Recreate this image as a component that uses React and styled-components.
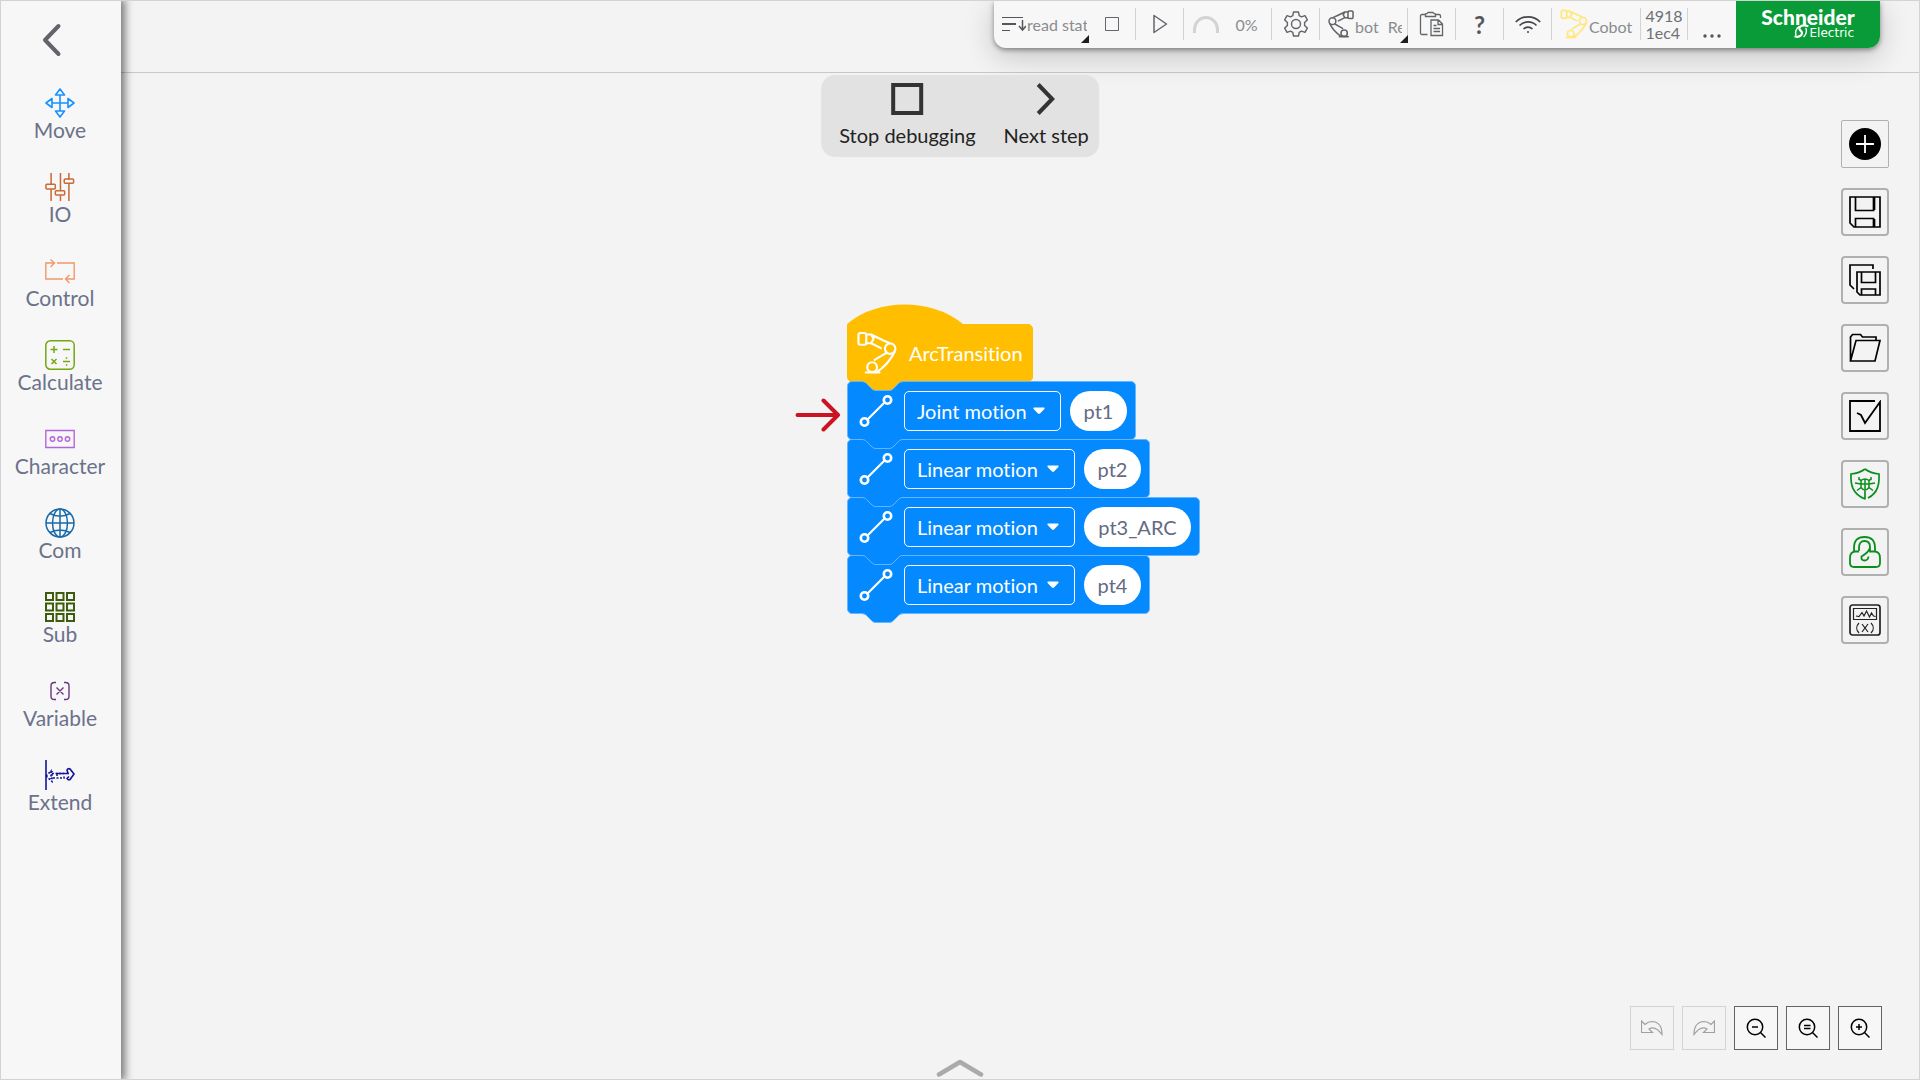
import styled, { createGlobalStyle } from 'styled-components'

const categories = [
  { name: 'Move', icon: <MoveIcon /> },
  { name: 'IO', icon: <SlidersIcon /> },
  { name: 'Control', icon: <LoopIcon /> },
  { name: 'Calculate', icon: <CalculateIcon /> },
  { name: 'Character', icon: <CharacterIcon /> },
  { name: 'Com', icon: <GlobeIcon /> },
  { name: 'Sub', icon: <GridIcon /> },
  { name: 'Variable', icon: <VariableIcon /> },
  { name: 'Extend', icon: <ExtendIcon /> },
]

const steps = [
  { motion: 'Joint motion', point: 'pt1', selectWidth: 157, pointWidth: 57 },
  { motion: 'Linear motion', point: 'pt2', selectWidth: 171, pointWidth: 57 },
  { motion: 'Linear motion', point: 'pt3_ARC', selectWidth: 171, pointWidth: 107 },
  { motion: 'Linear motion', point: 'pt4', selectWidth: 171, pointWidth: 57 },
]

const tools = [
  { name: 'Add', icon: <AddIcon />, thin: true },
  { name: 'Save', icon: <SaveIcon /> },
  { name: 'Save as', icon: <SaveAsIcon /> },
  { name: 'Open', icon: <FolderIcon /> },
  { name: 'Check', icon: <CheckIcon /> },
  { name: 'Debug', icon: <ShieldBugIcon /> },
  { name: 'Unlock', icon: <LockIcon /> },
  { name: 'Monitor variables', icon: <MonitorIcon /> },
]

const App = () => {
  return (
    <>
      <GlobalStyle />
      <Page>
        <Sidebar>
          <BackButton aria-label="Back">
            <svg width="20" height="34" viewBox="0 0 20 34">
              <path d="M16.500 3 3 17l13.500 14" fill="none" stroke="#626469" strokeWidth="4" strokeLinecap="round" strokeLinejoin="round" />
            </svg>
          </BackButton>
          {categories.map(({ name, icon }) => (
            <Category key={name}>
              {icon}
              <span>{name}</span>
            </Category>
          ))}
        </Sidebar>
        <Main>
          <Header>
            <StatusBar />
          </Header>
          <Canvas>
            <Program />
            <Toolbox>
              {tools.map(({ name, icon, thin }) => (
                <ToolButton key={name} aria-label={name} $thin={thin}>
                  {icon}
                </ToolButton>
              ))}
            </Toolbox>
            <ZoomBar>
              <ZoomButton aria-label="Undo" disabled>
                <UndoIcon />
              </ZoomButton>
              <ZoomButton aria-label="Redo" disabled>
                <UndoIcon flip />
              </ZoomButton>
              <ZoomButton aria-label="Zoom out">
                <MagnifierIcon d="M6 9h6" />
              </ZoomButton>
              <ZoomButton aria-label="Reset zoom">
                <MagnifierIcon d="M6 7.500h6.500M6 10.500h6.500" />
              </ZoomButton>
              <ZoomButton aria-label="Zoom in">
                <MagnifierIcon d="M6 9h6M9 6v6" />
              </ZoomButton>
            </ZoomBar>
          </Canvas>
        </Main>
        <DebugPanel>
          <DebugButton>
            <svg width="34" height="34" viewBox="0 0 34 34">
              <rect x="3" y="3" width="28" height="28" fill="none" stroke="#333" strokeWidth="4" />
            </svg>
            Stop debugging
          </DebugButton>
          <DebugButton>
            <svg width="34" height="34" viewBox="0 0 34 34">
              <path d="M9 2.500 23 17 9 31.500" fill="none" stroke="#333" strokeWidth="4" />
            </svg>
            Next step
          </DebugButton>
        </DebugPanel>
        <DrawerHandle aria-label="Open drawer">
          <svg width="48" height="18" viewBox="0 0 48 18">
            <path d="M3 15.500 24 3l21 12.500" fill="none" stroke="#a8aaac" strokeWidth="4.500" strokeLinecap="round" strokeLinejoin="round" />
          </svg>
        </DrawerHandle>
      </Page>
    </>
  )
}

export default App

const StatusBar = () => {
  return (
    <Bar>
      <Cell as="button" $width={95} $start $plain>
        <ThreadIcon />
        <Clip $width={60}>read stat</Clip>
        <Corner $right={0} />
      </Cell>
      <Cell as="button" aria-label="Stop" $width={47}>
        <svg width="14" height="14" viewBox="0 0 14 14">
          <path d="M.5.5h13v13H.5z" fill="none" stroke="#626469" />
        </svg>
      </Cell>
      <Cell as="button" aria-label="Run" $width={48}>
        <svg width="16" height="20" viewBox="0 0 16 20">
          <path d="M2 1.500 14.500 10 2 18.500z" fill="none" stroke="#626469" strokeWidth="1.500" strokeLinejoin="round" />
        </svg>
      </Cell>
      <Cell $width={88} $gap={16}>
        <svg width="26" height="17" viewBox="0 0 26 17">
          <path d="M1.500 17v-3.500a11.500 12 0 0 1 23 0V17" fill="none" stroke="#d3d3d3" strokeWidth="3" />
        </svg>
        <Percent>0%</Percent>
      </Cell>
      <Cell as="button" aria-label="Settings" $width={48}>
        <GearIcon />
      </Cell>
      <Cell as="button" $width={88} $start>
        <RobotIcon width={26} height={30} color="#626469" stroke={2.4} flip />
        <LowText>bot</LowText>
        <Clip $width={14} $low>
          Re
        </Clip>
        <Corner $right={-1} />
      </Cell>
      <Cell as="button" aria-label="Logs" $width={48}>
        <ClipboardIcon />
      </Cell>
      <Cell as="button" aria-label="Help" $width={48}>
        <Question>?</Question>
      </Cell>
      <Cell as="button" aria-label="Network" $width={48}>
        <WifiIcon />
      </Cell>
      <Cell as="button" $width={89} $start>
        <RobotIcon width={28} height={30} color="#ffe87c" stroke={2.6} />
        <LowText>Cobot</LowText>
      </Cell>
      <Cell $width={47}>
        <Serial>
          4918
          <br />
          1ec4
        </Serial>
      </Cell>
      <Cell as="button" aria-label="More" $width={48} $plain>
        <Dots width="18" height="4" viewBox="0 0 18 4">
          <path d="M2 2h.01M9 2h.01M16 2h.01" stroke="#54565b" strokeWidth="3.400" strokeLinecap="round" />
        </Dots>
      </Cell>
      <Brand>
        <strong>Schneider</strong>
        <span>
          <svg width="15" height="15" viewBox="0 0 15 15">
            <path d="M13.500 2C9 .5 5 2 5.500 5c.5 2 3 2 2.500 4.500C7.500 12 4 13.500 1.500 12.500" fill="none" stroke="#fff" strokeWidth="2.200" strokeLinecap="round" />
            <path d="M5 2.500C2 5 1 8 2 11M10 12.500c2-2 3-5 2-8" fill="none" stroke="#fff" strokeWidth="1.400" strokeLinecap="round" />
          </svg>
          Electric
        </span>
      </Brand>
    </Bar>
  )
}

const Program = () => {
  return (
    <Stack>
      <Pointer width="46" height="34" viewBox="0 0 46 34">
        <path d="M2.500 17H43M28.500 2.500 43 17 28.500 31.500" fill="none" stroke="#cb1423" strokeWidth="4" strokeLinecap="round" strokeLinejoin="round" />
      </Pointer>
      <Hat width="116" height="20" viewBox="0 0 116 20">
        <path d="M0 20C30-6 85-6 116 20z" fill="#ffbf00" />
      </Hat>
      <StartBlock>
        <RobotIcon width={40} height={44} color="#fff" stroke={2.2} />
        <span>ArcTransition</span>
        <BlockNotch fill="#ffbf00" />
      </StartBlock>
      {steps.map(({ motion, point, selectWidth, pointWidth }) => (
        <Block key={point}>
          <svg width="34" height="34" viewBox="0 0 34 34">
            <path d="m8.500 25.500 17-17" stroke="#fff" strokeWidth="2.200" />
            <circle cx="5.500" cy="28" r="3.700" fill="none" stroke="#fff" strokeWidth="2.600" />
            <circle cx="28.500" cy="6" r="3.700" fill="none" stroke="#fff" strokeWidth="2.600" />
          </svg>
          <SelectBox $width={selectWidth}>
            <select aria-label={`Motion type of ${point}`} defaultValue={motion}>
              <option>Joint motion</option>
              <option>Linear motion</option>
            </select>
            <svg width="14" height="10" viewBox="0 0 14 10">
              <path d="M2 1.500h10q1.200.4.400 1.500L8 7.500q-1 .8-2 0L1.600 3Q.8 1.900 2 1.500z" fill="#fff" />
            </svg>
          </SelectBox>
          <Point aria-label="Point" defaultValue={point} $width={pointWidth} />
          <BlockNotch fill="#0489ff" />
        </Block>
      ))}
    </Stack>
  )
}

const BlockNotch = ({ fill }) => (
  <Notch width="42" height="11" viewBox="0 0 42 11">
    <path d="M0 0v1C3 1 4 2 5 3l5 5q1.500 1.500 4 1.500h13q2.500 0 4-1.500l5-5c1-1 2-2 5-2V0z" fill={fill} />
    <path d="M0 .5C3 .5 4 2 5 3l5 5q1.500 1.500 4 1.500h13q2.500 0 4-1.500l5-5c1-1 2-2.500 5-2.500" fill="none" stroke="#63b6ff" />
  </Notch>
)

function RobotIcon({ width, height, color, stroke, flip }) {
  return (
    <svg width={width} height={height} viewBox="0 0 41 45">
      <g transform={flip ? 'matrix(-1 0 0 1 41 0)' : undefined} fill="none" stroke={color} strokeWidth={stroke} strokeLinecap="round" strokeLinejoin="round">
        <rect x="1.500" y="2" width="8" height="12" rx="2" />
        <path d="M9.500 3.500h5L17 8l-2.500 4.500h-5M14.500 3.500c6 3 11 5.500 18 8.500M14.500 12.500l10 5" />
        <circle cx="34" cy="18" r="5.400" />
        <path d="m30 22.500-5 3-7 4M38.500 21.500c-4 8-10 15-17.500 20" />
        <circle cx="15.500" cy="37" r="5" />
        <path d="M9 42.500h14" />
      </g>
    </svg>
  )
}

function MoveIcon() {
  return (
    <svg width="30" height="30" viewBox="0 0 30 30" fill="none" stroke="#1890ff" strokeWidth="1.600" strokeLinejoin="round">
      <path d="M15 7v16M7 15h16M15 1l4.500 6h-9zM15 29l4.500-6h-9zM1 15l6-4.500v9zM29 15l-6-4.500v9z" />
    </svg>
  )
}

function SlidersIcon() {
  return (
    <svg width="32" height="32" viewBox="0 0 32 32" fill="none" stroke="#c76a35" strokeWidth="1.600">
      <path d="M6.500 1v12M6.500 18v13M16.500 1v19M16.500 25v6M25.500 1v7M25.500 12v19" />
      <rect x="1" y="13" width="10" height="5" rx="1" />
      <rect x="11" y="20" width="10" height="4.500" rx="1" />
      <rect x="20.500" y="7.500" width="10" height="4.500" rx="1" />
    </svg>
  )
}

function LoopIcon() {
  return (
    <svg width="30" height="30" viewBox="0 0 30 30" fill="none" stroke="#f0986a" strokeWidth="1.400">
      <path d="M18 23H.8V7H9M12 7h17.200v16H21M5.500 3.500 9.500 7l-4 4M24.500 19 20.500 23l4 4" />
    </svg>
  )
}

function CalculateIcon() {
  return (
    <svg width="30" height="30" viewBox="0 0 30 30" fill="none" stroke="#73a812" strokeWidth="1.500">
      <rect x=".8" y=".8" width="28.400" height="28.400" rx="4.500" />
      <path d="M5.500 9.500h7M9 6v7M18 9.500h7M6.500 19l5 5M11.500 19l-5 5M18 21.500h7M20.800 18h1.500M20.800 25h1.500" />
    </svg>
  )
}

function CharacterIcon() {
  return (
    <svg width="30" height="30" viewBox="0 0 30 30" fill="none" stroke="#b565db" strokeWidth="1.400">
      <path d="M.8 6.500h28.400v17H.8z" />
      <circle cx="7.500" cy="15" r="2.200" />
      <circle cx="15" cy="15" r="2.200" />
      <circle cx="22.500" cy="15" r="2.200" />
    </svg>
  )
}

function GlobeIcon() {
  return (
    <svg width="30" height="30" viewBox="0 0 30 30" fill="none" stroke="#1769aa" strokeWidth="1.500">
      <circle cx="15" cy="15" r="14" />
      <ellipse cx="15" cy="15" rx="7.500" ry="14" />
      <path d="M1 15h28M15 1v28M5 5.500c6 3.500 14 3.500 20 0M5 24.500c6-3.500 14-3.500 20 0" />
    </svg>
  )
}

function GridIcon() {
  return (
    <svg width="30" height="30" viewBox="0 0 30 30" fill="none" stroke="#3d5c0c" strokeWidth="2">
      {[1, 11.5, 22].map(y => [1, 11.5, 22].map(x => <rect key={`${x}-${y}`} x={x} y={y} width="7" height="7" />))}
    </svg>
  )
}

function VariableIcon() {
  return (
    <svg width="30" height="30" viewBox="0 0 30 30" fill="none" stroke="#6b3584" strokeWidth="1.400">
      <path d="M11 6.500H9.500q-3.500 0-3.500 3.500v10.500q0 3 3.500 3H11M19 6.500h1.500q3.500 0 3.500 3.500v10.500q0 3-3.500 3H19M11.500 11.500l7 7M18.500 11.500l-7 7" />
    </svg>
  )
}

function ExtendIcon() {
  return (
    <svg width="30" height="30" viewBox="0 0 30 30" fill="none" stroke="#141496" strokeWidth="1.600">
      <path d="M1 0v30" />
      <path d="M12 16v-2.500h11l-1-3.500q1-2 3-1l4 5-4 5.500q-2 1-3-1l2-2M12 13.500h12" />
      <path d="M1 16 6 11v8M1 16l6 5.500V11M7 13.500h12M8 18h11v-3" strokeDasharray="2 1.500" />
    </svg>
  )
}

function ThreadIcon() {
  return (
    <svg width="24" height="16" viewBox="0 0 24 16" fill="none" stroke="#54565b">
      <path d="M0 1.500h21M0 14.500h8" strokeWidth="1.200" />
      <path d="M0 8h14" strokeWidth="2" />
      <path d="M20.500 4v9.500M17 10l3.500 4 3.500-4" strokeWidth="1.500" />
    </svg>
  )
}

function GearIcon() {
  return (
    <svg width="24" height="26" viewBox="0 0 24 26" fill="none" stroke="#626469" strokeWidth="1.400" strokeLinejoin="round">
      <path d="M9.500 1h5l.7 3.600 2.300 1.300 3.500-1.200 2.300 4.200-2.700 2.500v3.200l2.700 2.500-2.300 4.200-3.500-1.200-2.300 1.300-.7 3.600h-5l-.7-3.600-2.300-1.300L3 21.300.7 17.100l2.700-2.500v-3.200L.7 8.900 3 4.700l3.500 1.200 2.300-1.300z" />
      <circle cx="12" cy="13" r="4.500" />
    </svg>
  )
}

function ClipboardIcon() {
  return (
    <svg width="25" height="26" viewBox="0 0 24 26" fill="none" stroke="#626469" strokeWidth="1.300">
      <path d="M8 23.500H2.500Q1 23.500 1 22V5q0-1.500 1.500-1.500H6M16 3.500h3.500Q21 3.500 21 5v2M6 5.500V3q2-.3 2.500-1.500h5Q14 2.700 16 3v2.500z" />
      <path d="M11.500 9h7.500l4 4v11.500H11.500zM18.500 9v4.500H23M14 14.500h3M14 17.500h6.500M14 20.500h6.500" />
    </svg>
  )
}

function WifiIcon() {
  return (
    <svg width="26" height="20" viewBox="0 0 26 20" fill="none" stroke="#45474b" strokeWidth="1.700">
      <path d="M.8 8a17 17 0 0 1 24.400 0M4.500 11.500a12 12 0 0 1 17 0M8.500 15a6.500 6.500 0 0 1 9 0" />
      <circle cx="13" cy="18" r="1" fill="#45474b" stroke="none" />
    </svg>
  )
}

function AddIcon() {
  return (
    <svg width="32" height="32" viewBox="0 0 32 32">
      <circle cx="16" cy="16" r="16" />
      <path d="M7 16h18M16 7v18" stroke="#fff" strokeWidth="1.800" />
    </svg>
  )
}

function SaveIcon() {
  return (
    <svg width="32" height="32" viewBox="0 0 32 32" fill="none" stroke="#000" strokeWidth="1.700">
      <path d="M1 1h30v30H5l-4-4zM6.500 1v13.500h18V1M6.500 31v-8.500h18V31M25.500 1v13M25.500 23v8" />
    </svg>
  )
}

function SaveAsIcon() {
  return (
    <svg width="32" height="32" viewBox="0 0 32 32" fill="none" stroke="#000" strokeWidth="1.700">
      <path d="M24 5V1H1v20l4 4M8 8h23v23H11l-3-3zM12.500 8v10.500h14V8M12.500 31v-6h14v6" />
    </svg>
  )
}

function FolderIcon() {
  return (
    <svg width="32" height="32" viewBox="0 0 32 32" fill="none" stroke="#000" strokeWidth="1.700">
      <path d="M1.500 29V5l2-2.500h8L13.500 5h13.500v3.500M1.500 29 7 8.500h24L26 29z" />
    </svg>
  )
}

function CheckIcon() {
  return (
    <svg width="32" height="32" viewBox="0 0 32 32" fill="none" stroke="#000" strokeWidth="1.800">
      <path d="M26 1H1v30h30V2L16 23l-4-8-4-2" />
    </svg>
  )
}

function ShieldBugIcon() {
  return (
    <svg width="32" height="34" viewBox="0 0 32 34" fill="none" stroke="#0a8f1e" strokeWidth="1.700">
      <path d="M16 32.500v-9M16 2C12 5 7 6.500 2 7c-.5 10 1 20 14 25M16 2c4 3 9 4.500 14 5 .5 10-1 19-11 24" />
      <path d="M12 13.500q4-3 8 0v7q-4 5-8 0zM12 17h8M10 10v2.500l3 1M22 10v2.500l-3 1M6 16l6 1M26 16l-6 1M8 23.500l4-3M24 23.500l-4-3M16 12v10" strokeWidth="1.500" />
    </svg>
  )
}

function LockIcon() {
  return (
    <svg width="32" height="32" viewBox="0 0 32 32" fill="none" stroke="#0a8f1e" strokeWidth="1.800">
      <path d="M10 15v-3q0-7 5.500-7t5.500 6q0 3-3 5.500-1.500 1.500-5.500 4-.5 4 3 4t4-4M10 15.500H6Q1 16 1 22v5q0 4 4 4h22q4 0 4-4v-5q0-6-5-6.500V12Q26 1 15.500 1T5 12v4M21 11v4.500h5" />
    </svg>
  )
}

function MonitorIcon() {
  return (
    <svg width="32" height="32" viewBox="0 0 32 32" fill="none" stroke="#222" strokeWidth="1.700">
      <rect x="1" y="1" width="30" height="30" rx="2.500" />
      <path d="M4.500 4.500h23v11h-23zM7 12l3 .5 3-4 2 3.500 2.500-5 3 6 2-4 2 3 2 .5M10 19c-3 3-3 7 0 10M22 19c3 3 3 7 0 10M13 20l6 8M19 20l-6 8" strokeWidth="1.200" />
    </svg>
  )
}

function UndoIcon({ flip }) {
  return (
    <svg width="22" height="16" viewBox="0 0 22 16">
      <path transform={flip ? 'matrix(-1 0 0 1 22 0)' : undefined} d="M.5 1v11.500h11L8 9q6-4 13 5.500Q21 2 11 1.500 7 1.500 4 4.500z" fill="none" stroke="#a0a0a0" strokeWidth="1.200" />
    </svg>
  )
}

function MagnifierIcon({ d }) {
  return (
    <svg width="20" height="20" viewBox="0 0 20 20" fill="none" stroke="#000" strokeWidth="1.500">
      <circle cx="9" cy="9" r="7.700" />
      <path d="m14.500 14.500 5 5" />
      <path d={d} />
    </svg>
  )
}

const GlobalStyle = createGlobalStyle`
  body {
    margin: 0;
    background: #f3f3f3;
    font-family: Lato, 'Open Sans', sans-serif;
    font-variant-ligatures: none;
  }
  *, *::before, *::after {
    box-sizing: border-box;
  }
  button, select, input {
    font: inherit;
    font-variant-ligatures: none;
    color: inherit;
    margin: 0;
    padding: 0;
    border: 0;
    background: none;
  }
  svg {
    display: block;
    flex-shrink: 0;
  }
`

const Page = styled.div`
  position: relative;
  display: flex;
  min-height: 100vh;
  border: 1px solid #d3d3d3;
  overflow: hidden;
`

const Sidebar = styled.nav`
  display: flex;
  flex-direction: column;
  align-items: stretch;
  width: 120px;
  flex-shrink: 0;
  padding-right: 2px;
  background: #f7f7f7;
  box-shadow: 2px 0 8px 2px rgba(0, 0, 0, 0.5);
  z-index: 1;
`

const BackButton = styled.button`
  display: flex;
  justify-content: center;
  height: 87px;
  padding: 22px 16px 0 0;
`

const Category = styled.button`
  display: flex;
  flex-direction: column;
  align-items: center;
  height: 84px;
  color: #6b728a;
  font-size: 21px;
  line-height: 24px;
  > svg {
    width: 30px;
    height: 30px;
  }
`

const Main = styled.div`
  display: flex;
  flex-direction: column;
  flex: 1;
  min-width: 0;
`

const Header = styled.header`
  display: flex;
  justify-content: flex-end;
  height: 72px;
  padding-right: 39px;
  border-bottom: 1px solid #c8c8c8;
`

const Bar = styled.div`
  display: flex;
  align-items: flex-start;
  height: 47px;
  background: #f7f7f7;
  border-radius: 0 0 12px 12px;
  box-shadow: 0 2px 5px rgba(0, 0, 0, 0.4), 0 8px 30px rgba(0, 0, 0, 0.2);
  color: #8a8c8f;
  font-size: 16px;
`

const Cell = styled.div`
  position: relative;
  display: flex;
  align-items: center;
  justify-content: ${props => (props.$start ? 'flex-start' : 'center')};
  gap: ${props => props.$gap || 1}px;
  width: ${props => props.$width}px;
  height: 32px;
  margin-top: 7px;
  padding-left: ${props => (props.$start ? 8 : 0)}px;
  && {
    border-right: ${props => (props.$plain ? '0' : '1px solid #d3d3d3')};
  }
`

const Clip = styled.span`
  width: ${props => props.$width}px;
  overflow: hidden;
  white-space: nowrap;
  text-align: left;
  margin-left: ${props => (props.$low ? 8 : 0)}px;
  padding-top: ${props => (props.$low ? 4 : 0)}px;
`

const LowText = styled.span`
  padding-top: 4px;
`

const Percent = styled.span`
  padding-right: 4px;
`

const Corner = styled.i`
  position: absolute;
  right: ${props => props.$right}px;
  bottom: -3px;
  border-left: 8px solid transparent;
  border-bottom: 8px solid #1d1d1f;
`

const Question = styled.span`
  color: #54565b;
  font-size: 24px;
  font-weight: 700;
`

const Serial = styled.span`
  color: #6e7074;
  font-size: 16px;
  line-height: 17px;
`

const Dots = styled.svg`
  margin-top: 24px;
`

const Brand = styled.div`
  display: flex;
  flex-direction: column;
  align-items: center;
  width: 144px;
  height: 47px;
  padding-top: 7px;
  background: #089b37;
  border-radius: 0 0 12px 0;
  color: #fff;
  strong {
    font-size: 21px;
    font-weight: 900;
    line-height: 18px;
  }
  span {
    display: flex;
    align-self: flex-end;
    padding-right: 26px;
    font-family: 'DejaVu Sans', sans-serif;
    font-size: 12px;
    line-height: 14px;
    gap: 1px;
  }
  svg {
    margin-top: -2px;
  }
`

const Canvas = styled.main`
  position: relative;
  flex: 1;
  min-height: 640px;
`

const Stack = styled.div`
  position: absolute;
  left: 726px;
  top: 231px;
`

const Pointer = styled.svg`
  position: absolute;
  left: -52px;
  top: 94px;
`

const Hat = styled.svg`
  width: 116px;
`

const Block = styled.div`
  position: relative;
  display: flex;
  align-items: center;
  gap: 9px;
  width: max-content;
  height: 59px;
  margin-bottom: -1px;
  padding: 0 8px 0 11px;
  border: 1px solid #63b6ff;
  border-radius: 5px;
  background: #0489ff;
  color: #fff;
  font-size: 20px;
  > svg:first-child {
    margin-right: 2px;
  }
`

const StartBlock = styled(Block)`
  gap: 10px;
  width: 186px;
  height: 58px;
  padding: 0 9px;
  border-color: #ffbf00;
  border-radius: 0 5px 5px 5px;
  background: #ffbf00;
`

const Notch = styled.svg`
  position: absolute;
  left: 14px;
  bottom: -11px;
  z-index: 1;
`

const SelectBox = styled.label`
  position: relative;
  display: flex;
  align-items: center;
  width: ${props => props.$width}px;
  height: 40px;
  border: 1px solid #fff;
  border-radius: 5px;
  select {
    appearance: none;
    width: 100%;
    height: 100%;
    padding: 0 30px 0 12px;
    cursor: pointer;
  }
  svg {
    position: absolute;
    right: 14px;
    pointer-events: none;
  }
`

const Point = styled.input`
  && {
    width: ${props => props.$width}px;
    height: 40px;
    border-radius: 20px;
    background: #fff;
    color: #636a83;
    text-align: center;
  }
`

const Toolbox = styled.div`
  position: absolute;
  top: 47px;
  right: 30px;
  display: grid;
  gap: 20px;
`

const ToolButton = styled.button`
  display: flex;
  align-items: center;
  justify-content: center;
  width: 48px;
  height: 48px;
  && {
    border: ${props => (props.$thin ? 1 : 2)}px solid #b0b0b0;
    border-radius: ${props => (props.$thin ? 2 : 4)}px;
  }
`

const ZoomBar = styled.div`
  position: absolute;
  right: 37px;
  bottom: 29px;
  display: flex;
  gap: 8px;
`

const ZoomButton = styled.button`
  display: flex;
  align-items: center;
  justify-content: center;
  width: 44px;
  height: 44px;
  && {
    border: 1px solid #626469;
    background: #f7f7f7;
  }
  &&:disabled {
    border-color: #d3d3d3;
    background: none;
  }
`

const DebugPanel = styled.div`
  position: absolute;
  top: 74px;
  left: 50%;
  transform: translateX(-50%);
  display: flex;
  gap: 28px;
  height: 82px;
  padding: 7px 10px 0 18px;
  border-radius: 14px;
  background: #e2e2e2;
`

const DebugButton = styled.button`
  display: flex;
  flex-direction: column;
  align-items: center;
  gap: 6px;
  color: #222;
  font-size: 20px;
  line-height: 26px;
  white-space: nowrap;
`

const DrawerHandle = styled.button`
  position: absolute;
  left: 50%;
  bottom: 2px;
  transform: translateX(-50%);
`
